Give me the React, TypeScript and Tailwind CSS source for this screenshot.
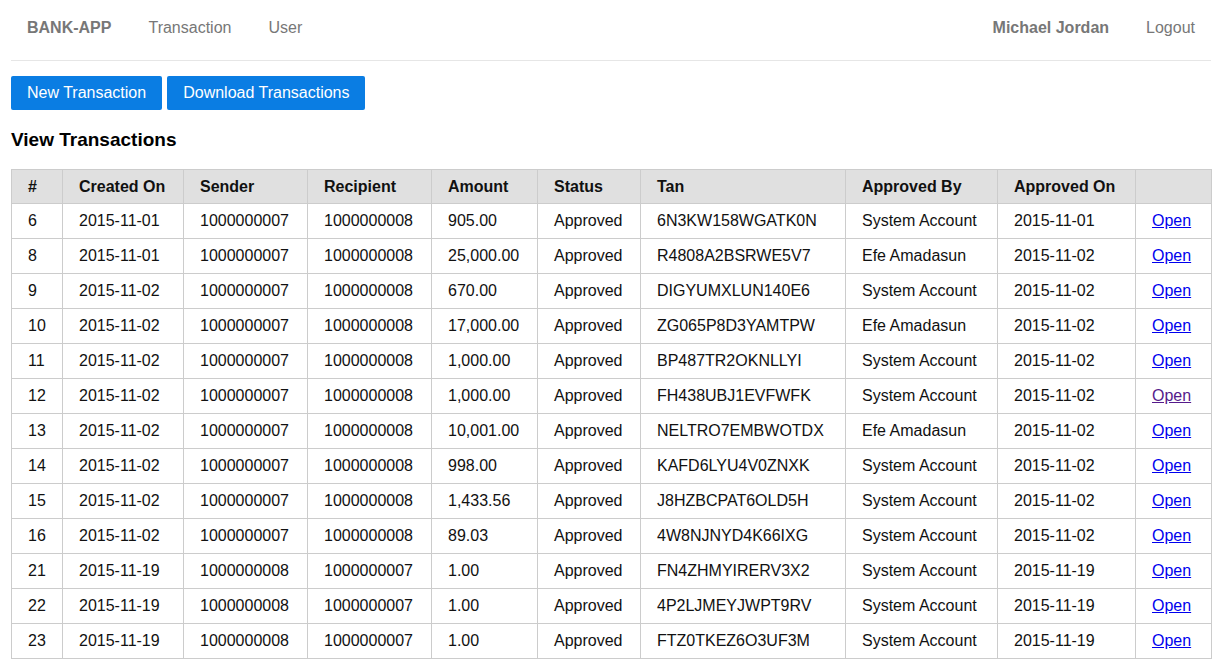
import React from 'react';

type Txn = {
  id: number;
  created: string;
  sender: string;
  recipient: string;
  amount: string;
  tan: string;
  approvedBy: string;
  approvedOn: string;
  visited?: boolean;
};

const transactions: Txn[] = [
  { id: 6, created: '2015-11-01', sender: '1000000007', recipient: '1000000008', amount: '905.00', tan: '6N3KW158WGATK0N', approvedBy: 'System Account', approvedOn: '2015-11-01' },
  { id: 8, created: '2015-11-01', sender: '1000000007', recipient: '1000000008', amount: '25,000.00', tan: 'R4808A2BSRWE5V7', approvedBy: 'Efe Amadasun', approvedOn: '2015-11-02' },
  { id: 9, created: '2015-11-02', sender: '1000000007', recipient: '1000000008', amount: '670.00', tan: 'DIGYUMXLUN140E6', approvedBy: 'System Account', approvedOn: '2015-11-02' },
  { id: 10, created: '2015-11-02', sender: '1000000007', recipient: '1000000008', amount: '17,000.00', tan: 'ZG065P8D3YAMTPW', approvedBy: 'Efe Amadasun', approvedOn: '2015-11-02' },
  { id: 11, created: '2015-11-02', sender: '1000000007', recipient: '1000000008', amount: '1,000.00', tan: 'BP487TR2OKNLLYI', approvedBy: 'System Account', approvedOn: '2015-11-02' },
  { id: 12, created: '2015-11-02', sender: '1000000007', recipient: '1000000008', amount: '1,000.00', tan: 'FH438UBJ1EVFWFK', approvedBy: 'System Account', approvedOn: '2015-11-02', visited: true },
  { id: 13, created: '2015-11-02', sender: '1000000007', recipient: '1000000008', amount: '10,001.00', tan: 'NELTRO7EMBWOTDX', approvedBy: 'Efe Amadasun', approvedOn: '2015-11-02' },
  { id: 14, created: '2015-11-02', sender: '1000000007', recipient: '1000000008', amount: '998.00', tan: 'KAFD6LYU4V0ZNXK', approvedBy: 'System Account', approvedOn: '2015-11-02' },
  { id: 15, created: '2015-11-02', sender: '1000000007', recipient: '1000000008', amount: '1,433.56', tan: 'J8HZBCPAT6OLD5H', approvedBy: 'System Account', approvedOn: '2015-11-02' },
  { id: 16, created: '2015-11-02', sender: '1000000007', recipient: '1000000008', amount: '89.03', tan: '4W8NJNYD4K66IXG', approvedBy: 'System Account', approvedOn: '2015-11-02' },
  { id: 21, created: '2015-11-19', sender: '1000000008', recipient: '1000000007', amount: '1.00', tan: 'FN4ZHMYIRERV3X2', approvedBy: 'System Account', approvedOn: '2015-11-19' },
  { id: 22, created: '2015-11-19', sender: '1000000008', recipient: '1000000007', amount: '1.00', tan: '4P2LJMEYJWPT9RV', approvedBy: 'System Account', approvedOn: '2015-11-19' },
  { id: 23, created: '2015-11-19', sender: '1000000008', recipient: '1000000007', amount: '1.00', tan: 'FTZ0TKEZ6O3UF3M', approvedBy: 'System Account', approvedOn: '2015-11-19' },
];

const headers = ['#', 'Created On', 'Sender', 'Recipient', 'Amount', 'Status', 'Tan', 'Approved By', 'Approved On', ''];
const widths = ['w-[51px]', 'w-[121px]', 'w-[124px]', 'w-[124px]', 'w-[106px]', 'w-[103px]', 'w-[205px]', 'w-[152px]', 'w-[138px]', 'w-[76px]'];

const td = 'border border-[#cccccc] px-4 h-[35px] align-middle';
const th = 'border border-[#cccccc] px-4 h-[34px] align-middle text-left font-bold';

export default function App() {
  return (
    <div className="min-h-screen bg-white px-[11px] font-['Liberation_Sans',Arial,sans-serif] text-[16px] text-[#111]">
      {/* Navbar */}
      <nav className="h-[61px] border-b border-[#e6e6e6] flex items-center justify-between px-4 text-[#777] pb-[4px]">
        <div className="flex items-center gap-[37px]">
          <span className="font-bold">BANK-APP</span>
          <a>Transaction</a>
          <a>User</a>
        </div>
        <div className="flex items-center gap-[37px]">
          <span className="font-bold">Michael Jordan</span>
          <a>Logout</a>
        </div>
      </nav>

      {/* Actions */}
      <div className="mt-[15px] flex gap-[5px]">
        <button className="h-[34px] px-4 rounded-[2px] bg-[#0a7de3] text-white">New Transaction</button>
        <button className="h-[34px] px-4 rounded-[2px] bg-[#0a7de3] text-white">Download Transactions</button>
      </div>

      <h2 className="mt-[18px] text-[19px] leading-[23px] font-bold text-black">View Transactions</h2>

      <table className="mt-[18px] w-full table-fixed border-collapse">
        <colgroup>
          {widths.map((w, i) => (
            <col key={i} className={w} />
          ))}
        </colgroup>
        <thead>
          <tr className="bg-[#e0e0e0]">
            {headers.map((h, i) => (
              <th key={i} className={th}>{h}</th>
            ))}
          </tr>
        </thead>
        <tbody>
          {transactions.map((t) => (
            <tr key={t.id}>
              <td className={td}>{t.id}</td>
              <td className={td}>{t.created}</td>
              <td className={td}>{t.sender}</td>
              <td className={td}>{t.recipient}</td>
              <td className={td}>{t.amount}</td>
              <td className={td}>Approved</td>
              <td className={td}>{t.tan}</td>
              <td className={td}>{t.approvedBy}</td>
              <td className={td}>{t.approvedOn}</td>
              <td className={td}>
                <a className={t.visited ? 'underline text-[#551a8b]' : 'underline text-[#0000ee]'} href="#">
                  Open
                </a>
              </td>
            </tr>
          ))}
        </tbody>
      </table>
    </div>
  );
}
